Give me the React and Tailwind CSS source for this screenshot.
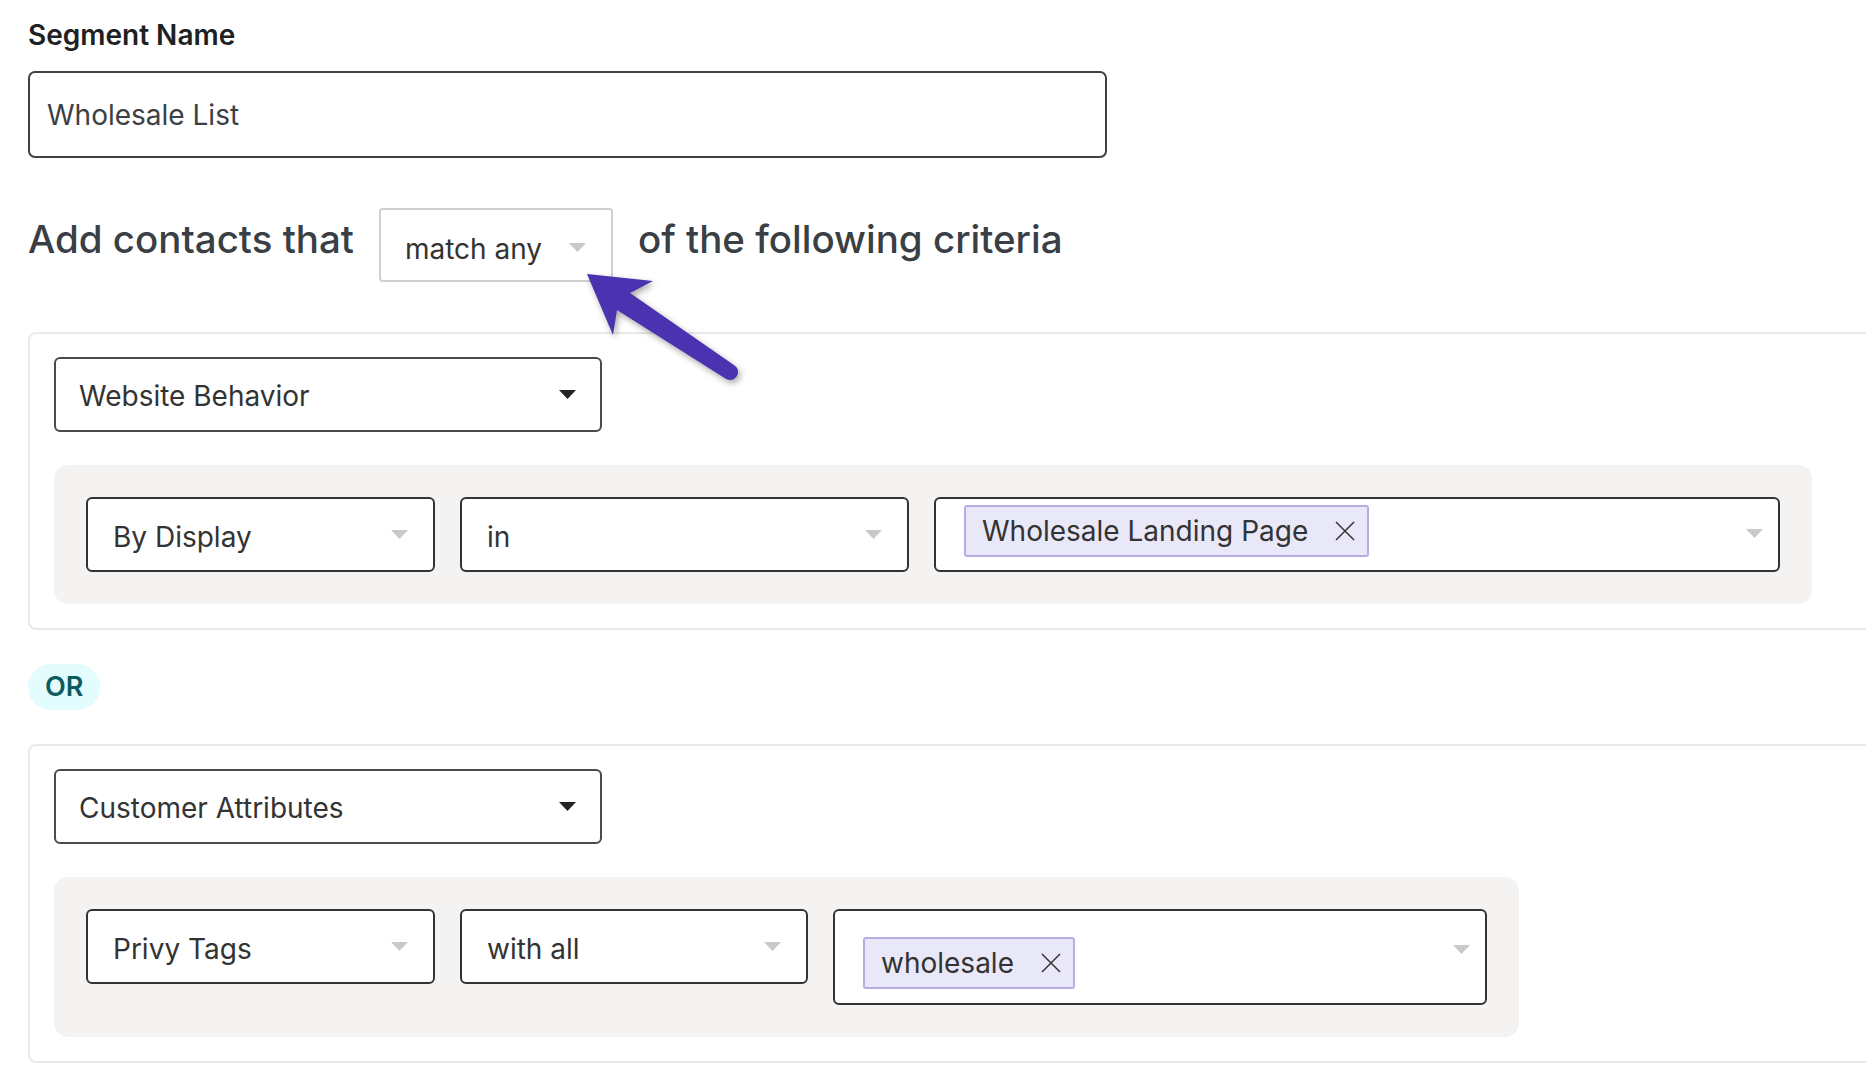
import React from 'react';

function Caret({ dark }) {
  return (
    <svg width="17" height="9" viewBox="0 0 17 9" className="shrink-0">
      <polygon points="0,0 17,0 8.5,9" fill={dark ? '#222222' : '#c9c9c9'} />
    </svg>
  );
}

function CloseX() {
  return (
    <svg width="22" height="22" viewBox="0 0 22 22" className="shrink-0">
      <path d="M2 2 L20 20 M20 2 L2 20" stroke="#333" strokeWidth="1.5" fill="none" />
    </svg>
  );
}

function Chip({ text }) {
  return (
    <div className="inline-flex items-center h-[52px] pl-[16px] pr-[11px] gap-[26px] border-2 border-[#b6aee2] bg-[#e9e8f8] rounded-[3px]">
      <span className="text-[28px] text-[#333]">{text}</span>
      <CloseX />
    </div>
  );
}

function Select({ width, label }) {
  return (
    <div
      className={`${width} h-[75px] shrink-0 flex items-center justify-between pl-[25px] pr-[25px] border-2 border-[#333] rounded-[6px] bg-white`}
    >
      <span className="pt-[4px] text-[28px] text-[#333]">{label}</span>
      <Caret />
    </div>
  );
}

function Category({ label }) {
  return (
    <div className="w-[548px] h-[75px] flex items-center justify-between pl-[23px] pr-[24px] border-2 border-[#4a4a4a] rounded-[6px] bg-white">
      <span className="pt-[2px] text-[28px] text-[#333]">{label}</span>
      <Caret dark />
    </div>
  );
}

function Group({ category, children }) {
  return (
    <div className="w-[1860px] border-2 border-[#e9e9e9] rounded-[8px] pt-[23px] px-6 pb-6 flex flex-col items-start gap-[33px]">
      <Category label={category} />
      <div className="bg-[#f4f3f2] rounded-[14px] p-[32px] flex items-start gap-[25px]">
        {children}
      </div>
    </div>
  );
}

export default function App() {
  return (
    <div className="relative min-h-screen overflow-hidden bg-white font-['Inter',sans-serif]">
      <div className="pl-[28px] pt-[19px] flex flex-col items-start">
        <label className="text-[28px] leading-[33px] font-semibold text-[#1e2124]">Segment Name</label>
        <div className="mt-[19px] w-[1079px] h-[87px] flex items-center pl-[17px] border-2 border-[#3d4246] rounded-[7px]">
          <span className="text-[28px] text-[#3b4045]">Wholesale List</span>
        </div>

        <div className="mt-[50px] flex items-start gap-[25px]">
          <h2 className="mt-[9px] text-[38.5px] leading-[44px] font-medium text-[#3a3f45]">Add contacts that</h2>
          <div className="w-[234px] h-[74px] flex items-start justify-between pl-[24px] pr-[25px] pt-[22px] border-2 border-[#d0d0d0] rounded-[4px]">
            <span className="text-[28px] leading-[34px] text-[#333]">match any</span>
            <span className="mt-[11px]"><Caret /></span>
          </div>
          <h2 className="mt-[9px] text-[38.5px] leading-[44px] font-medium text-[#3a3f45]">of the following criteria</h2>
        </div>

        <div className="mt-[50px]">
          <Group category="Website Behavior">
            <Select width="w-[349px]" label="By Display" />
            <Select width="w-[449px]" label="in" />
            <div className="w-[846px] h-[75px] flex items-start justify-between pl-[28px] pr-[15px] pt-[6px] border-2 border-[#333] rounded-[6px] bg-white">
              <Chip text="Wholesale Landing Page" />
              <span className="mt-[24px]"><Caret /></span>
            </div>
          </Group>
        </div>

        <div className="mt-[34px] h-[46px] px-[17px] flex items-center rounded-full bg-[#e3fcfd]">
          <span className="text-[27px] font-semibold text-[#0c5b61]">OR</span>
        </div>

        <div className="mt-[34px]">
          <Group category="Customer Attributes">
            <Select width="w-[349px]" label="Privy Tags" />
            <Select width="w-[348px]" label="with all" />
            <div className="w-[654px] h-[96px] flex items-start justify-between pl-[28px] pr-[15px] pt-[26px] border-2 border-[#333] rounded-[6px] bg-white">
              <Chip text="wholesale" />
              <span className="mt-[8px]"><Caret /></span>
            </div>
          </Group>
        </div>
      </div>

      <svg
        className="absolute left-0 top-0 pointer-events-none drop-shadow-[2px_3px_3px_rgba(0,0,0,0.35)]"
        width="1866"
        height="1084"
        viewBox="0 0 1866 1084"
      >
        <path
          d="M587 274 L653 281 L630 293 L734.6 365.4 A8 8 0 0 1 725.4 378.6 L617 310 L613 335 Z"
          fill="#4a32b0"
          strokeLinejoin="round"
        />
      </svg>
    </div>
  );
}
